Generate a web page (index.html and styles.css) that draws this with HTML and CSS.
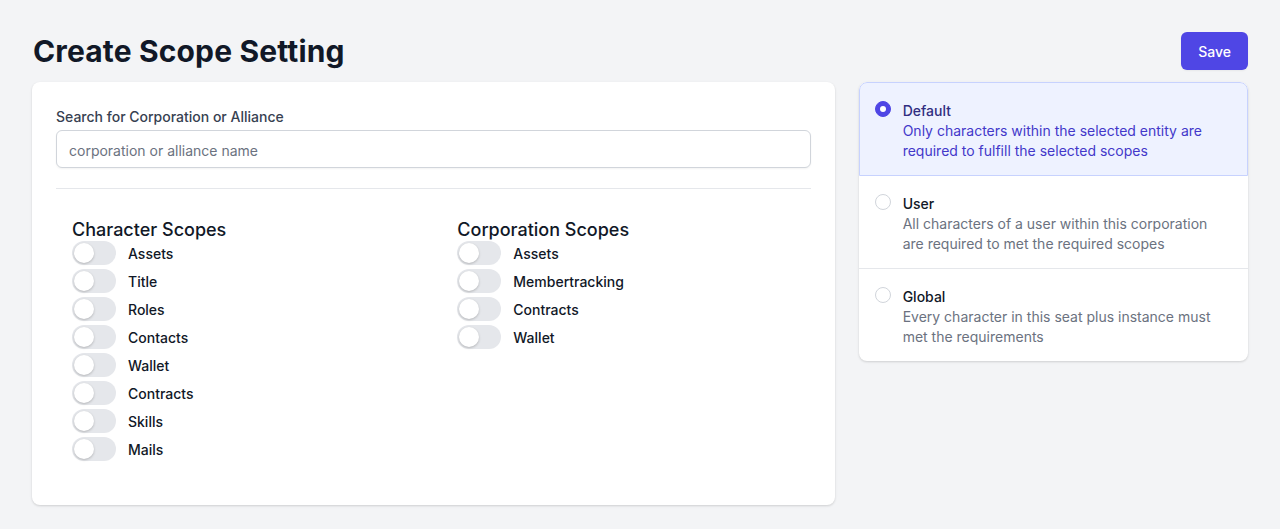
FILE: index.html
```html
<!DOCTYPE html>
<html lang="en">
<head>
<meta charset="utf-8">
<title>Create Scope Setting</title>
<link rel="stylesheet" href="styles.css">
</head>
<body>
<div class="page">
  <header class="header">
    <h1 class="title">Create Scope Setting</h1>
    <button class="btn-save" type="button">Save</button>
  </header>
  <div class="layout">
    <section class="card main">
      <label class="field-label" for="search">Search for Corporation or Alliance</label>
      <input id="search" class="field-input" type="text" placeholder="corporation or alliance name">
      <div class="divider"></div>
      <div class="scopes">
        <div class="scope-col">
          <h3 class="scope-title">Character Scopes</h3>
          <ul class="toggle-list">
            <li class="toggle-row"><span class="toggle"><span class="knob"></span></span><span class="toggle-label">Assets</span></li>
            <li class="toggle-row"><span class="toggle"><span class="knob"></span></span><span class="toggle-label">Title</span></li>
            <li class="toggle-row"><span class="toggle"><span class="knob"></span></span><span class="toggle-label">Roles</span></li>
            <li class="toggle-row"><span class="toggle"><span class="knob"></span></span><span class="toggle-label">Contacts</span></li>
            <li class="toggle-row"><span class="toggle"><span class="knob"></span></span><span class="toggle-label">Wallet</span></li>
            <li class="toggle-row"><span class="toggle"><span class="knob"></span></span><span class="toggle-label">Contracts</span></li>
            <li class="toggle-row"><span class="toggle"><span class="knob"></span></span><span class="toggle-label">Skills</span></li>
            <li class="toggle-row"><span class="toggle"><span class="knob"></span></span><span class="toggle-label">Mails</span></li>
          </ul>
        </div>
        <div class="scope-col">
          <h3 class="scope-title">Corporation Scopes</h3>
          <ul class="toggle-list">
            <li class="toggle-row"><span class="toggle"><span class="knob"></span></span><span class="toggle-label">Assets</span></li>
            <li class="toggle-row"><span class="toggle"><span class="knob"></span></span><span class="toggle-label">Membertracking</span></li>
            <li class="toggle-row"><span class="toggle"><span class="knob"></span></span><span class="toggle-label">Contracts</span></li>
            <li class="toggle-row"><span class="toggle"><span class="knob"></span></span><span class="toggle-label">Wallet</span></li>
          </ul>
        </div>
      </div>
    </section>
    <aside class="card options">
      <div class="option selected">
        <span class="radio checked"></span>
        <div class="option-text">
          <div class="option-title">Default</div>
          <div class="option-desc">Only characters within the selected entity are required to fulfill the selected scopes</div>
        </div>
      </div>
      <div class="option">
        <span class="radio"></span>
        <div class="option-text">
          <div class="option-title">User</div>
          <div class="option-desc">All characters of a user within this corporation are required to met the required scopes</div>
        </div>
      </div>
      <div class="option">
        <span class="radio"></span>
        <div class="option-text">
          <div class="option-title">Global</div>
          <div class="option-desc">Every character in this seat plus instance must met the requirements</div>
        </div>
      </div>
    </aside>
  </div>
</div>
</body>
</html>
```

FILE: styles.css
```css
* { box-sizing: border-box; }
html, body {
  margin: 0;
  padding: 0;
  background: #f3f4f6;
  font-family: Inter, "Noto Sans", "Liberation Sans", sans-serif;
  color: #111827;
}
.page {
  padding: 32px 32px;
}
.header {
  display: flex;
  align-items: center;
  justify-content: space-between;
  height: 38px;
  margin-bottom: 12px;
}
.title {
  margin: 0;
  font-size: 30px;
  line-height: 36px;
  font-weight: 700;
  letter-spacing: 0.15px;
  color: #111827;
  padding-left: 1px;
}
.btn-save {
  font-family: inherit;
  font-size: 14px;
  line-height: 20px;
  font-weight: 500;
  color: #fff;
  background: #4f46e5;
  border: 1px solid transparent;
  border-radius: 6px;
  padding: 9px 16px 7px;
  box-shadow: 0 1px 2px rgba(0,0,0,0.05);
}
.layout {
  display: grid;
  grid-template-columns: repeat(3, minmax(0, 1fr));
  gap: 24px;
  align-items: start;
}
.card {
  background: #fff;
  border-radius: 8px;
  box-shadow: 0 1px 3px rgba(0,0,0,0.1), 0 1px 2px rgba(0,0,0,0.06);
}
.main {
  grid-column: span 2;
  padding: 24px 24px 44px;
}
.field-label {
  display: block;
  padding-top: 1px;
  font-size: 14px;
  line-height: 20px;
  font-weight: 500;
  color: #374151;
}
.field-input {
  display: block;
  width: 100%;
  margin-top: 3px;
  height: 38px;
  padding: 9px 12px 7px;
  font-family: inherit;
  font-size: 14px;
  line-height: 20px;
  color: #111827;
  border: 1px solid #d1d5db;
  border-radius: 6px;
  box-shadow: 0 1px 2px rgba(0,0,0,0.05);
  outline: none;
}
.field-input::placeholder { color: #6b7280; }
.divider {
  margin-top: 20px;
  border-top: 1px solid #e5e7eb;
}
.scopes {
  display: grid;
  grid-template-columns: 1fr 1fr;
  gap: 16px;
  padding-top: 29px;
}
.scope-col {
  padding: 0 16px;
}
.scope-title {
  margin: 0;
  padding-top: 1px;
  font-size: 18px;
  line-height: 22px;
  font-weight: 500;
  color: #111827;
}
.toggle-list {
  list-style: none;
  margin: 0;
  padding: 0;
  display: flex;
  flex-direction: column;
  gap: 4px;
}
.toggle-row {
  display: flex;
  align-items: center;
  gap: 12px;
  height: 24px;
}
.toggle {
  position: relative;
  flex: none;
  width: 44px;
  height: 24px;
  border-radius: 12px;
  background: #e5e7eb;
}
.knob {
  position: absolute;
  left: 2px;
  top: 2px;
  width: 20px;
  height: 20px;
  border-radius: 50%;
  background: #fff;
  box-shadow: 0 1px 3px rgba(0,0,0,0.15), 0 1px 2px rgba(0,0,0,0.08);
}
.toggle-label {
  padding-top: 2px;
  font-size: 14px;
  line-height: 20px;
  font-weight: 500;
  color: #111827;
}
.options {
  overflow: hidden;
}
.option {
  display: flex;
  gap: 12px;
  padding: 16px 16px 14px;
  border-top: 1px solid #e5e7eb;
}
.option-text {
  padding-top: 2px;
}
.option:first-child { border-top: 1px solid transparent; }
.option.selected {
  background: #eef2ff;
  border: 1px solid #c7d2fe;
  border-radius: 8px 8px 0 0;
  padding-left: 15px;
}
.option.selected + .option { border-top: none; }
.radio {
  flex: none;
  width: 16px;
  height: 16px;
  margin-top: 2px;
  border-radius: 50%;
  border: 1px solid #d1d5db;
  background: #fff;
  position: relative;
}
.radio.checked {
  background: #4f46e5;
  border-color: #4f46e5;
}
.radio.checked::after {
  content: "";
  position: absolute;
  left: 4px;
  top: 4px;
  width: 6px;
  height: 6px;
  border-radius: 50%;
  background: #fff;
}
.option-title {
  font-size: 14px;
  line-height: 20px;
  font-weight: 500;
  color: #111827;
}
.option-desc {
  font-size: 14px;
  line-height: 20px;
  color: #6b7280;
}
.selected .option-title { color: #312e81; }
.selected .option-desc { color: #4338ca; }
```
